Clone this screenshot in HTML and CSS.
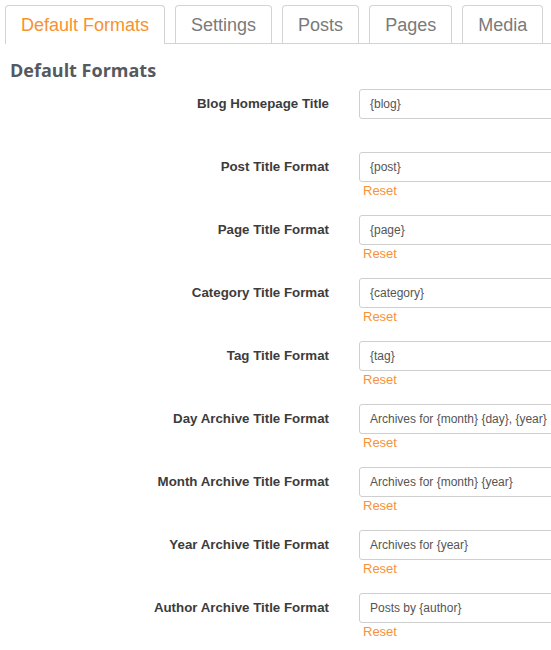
FILE: index.html
```html
<!DOCTYPE html>
<html>
<head>
<meta charset="utf-8">
<link rel="stylesheet" href="styles.css">
</head>
<body>
<div class="tabs">
  <div class="tab active">Default Formats</div>
  <div class="tab">Settings</div>
  <div class="tab">Posts</div>
  <div class="tab">Pages</div>
  <div class="tab">Media</div>
</div>
<h2 class="heading">Default Formats</h2>
<div class="form">
  <div class="row">
    <label class="label">Blog Homepage Title</label>
    <div class="field"><div class="input">{blog}</div><div class="reset"></div></div>
  </div>
  <div class="row">
    <label class="label">Post Title Format</label>
    <div class="field"><div class="input">{post}</div><div class="reset">Reset</div></div>
  </div>
  <div class="row">
    <label class="label">Page Title Format</label>
    <div class="field"><div class="input">{page}</div><div class="reset">Reset</div></div>
  </div>
  <div class="row">
    <label class="label">Category Title Format</label>
    <div class="field"><div class="input">{category}</div><div class="reset">Reset</div></div>
  </div>
  <div class="row">
    <label class="label">Tag Title Format</label>
    <div class="field"><div class="input">{tag}</div><div class="reset">Reset</div></div>
  </div>
  <div class="row">
    <label class="label">Day Archive Title Format</label>
    <div class="field"><div class="input">Archives for {month} {day}, {year}</div><div class="reset">Reset</div></div>
  </div>
  <div class="row">
    <label class="label">Month Archive Title Format</label>
    <div class="field"><div class="input">Archives for {month} {year}</div><div class="reset">Reset</div></div>
  </div>
  <div class="row">
    <label class="label">Year Archive Title Format</label>
    <div class="field"><div class="input">Archives for {year}</div><div class="reset">Reset</div></div>
  </div>
  <div class="row">
    <label class="label">Author Archive Title Format</label>
    <div class="field"><div class="input">Posts by {author}</div><div class="reset">Reset</div></div>
  </div>
</div>
</body>
</html>
```
FILE: styles.css
```css
html, body {
  margin: 0;
  padding: 0;
  background: #fff;
  overflow: hidden;
  font-family: "Liberation Sans", Arial, sans-serif;
}
.tabs {
  display: flex;
  align-items: flex-end;
  gap: 10px;
  margin: 5px 0 0 5px;
  border-bottom: 1px solid #d3d3d3;
}
.tab {
  box-sizing: border-box;
  height: 38px;
  line-height: 38px;
  padding: 0 15px;
  font-size: 18px;
  color: #7a7a7a;
  border: 1px solid #d3d3d3;
  border-bottom: none;
  border-radius: 4px 4px 0 0;
  background: #fff;
  white-space: nowrap;
}
.tab.active {
  color: #f7922f;
  height: 39px;
  margin-bottom: -1px;
}
.heading {
  margin: 0;
  padding: 13px 0 0 10px;
  font-family: "Open Sans", sans-serif;
  font-weight: 700;
  font-size: 18px;
  line-height: 26px;
  color: #555960;
}
.form {
  padding-top: 6px;
}
.row {
  display: flex;
  margin-bottom: 16px;
}
.label {
  flex: none;
  width: 359px;
  box-sizing: border-box;
  padding-right: 30px;
  text-align: right;
  font-size: 13.3px;
  font-weight: 700;
  color: #3c3c3c;
  line-height: 30px;
}
.field {
  flex: none;
  width: 320px;
}
.input {
  box-sizing: border-box;
  height: 30px;
  border: 1px solid #cfcfcf;
  border-radius: 3px;
  padding: 0 10px;
  font-size: 12px;
  line-height: 28px;
  color: #555;
  background: #fff;
}
.reset {
  height: 17px;
  line-height: 17px;
  padding-left: 4px;
  font-size: 13px;
  color: #f7923a;
}
```
